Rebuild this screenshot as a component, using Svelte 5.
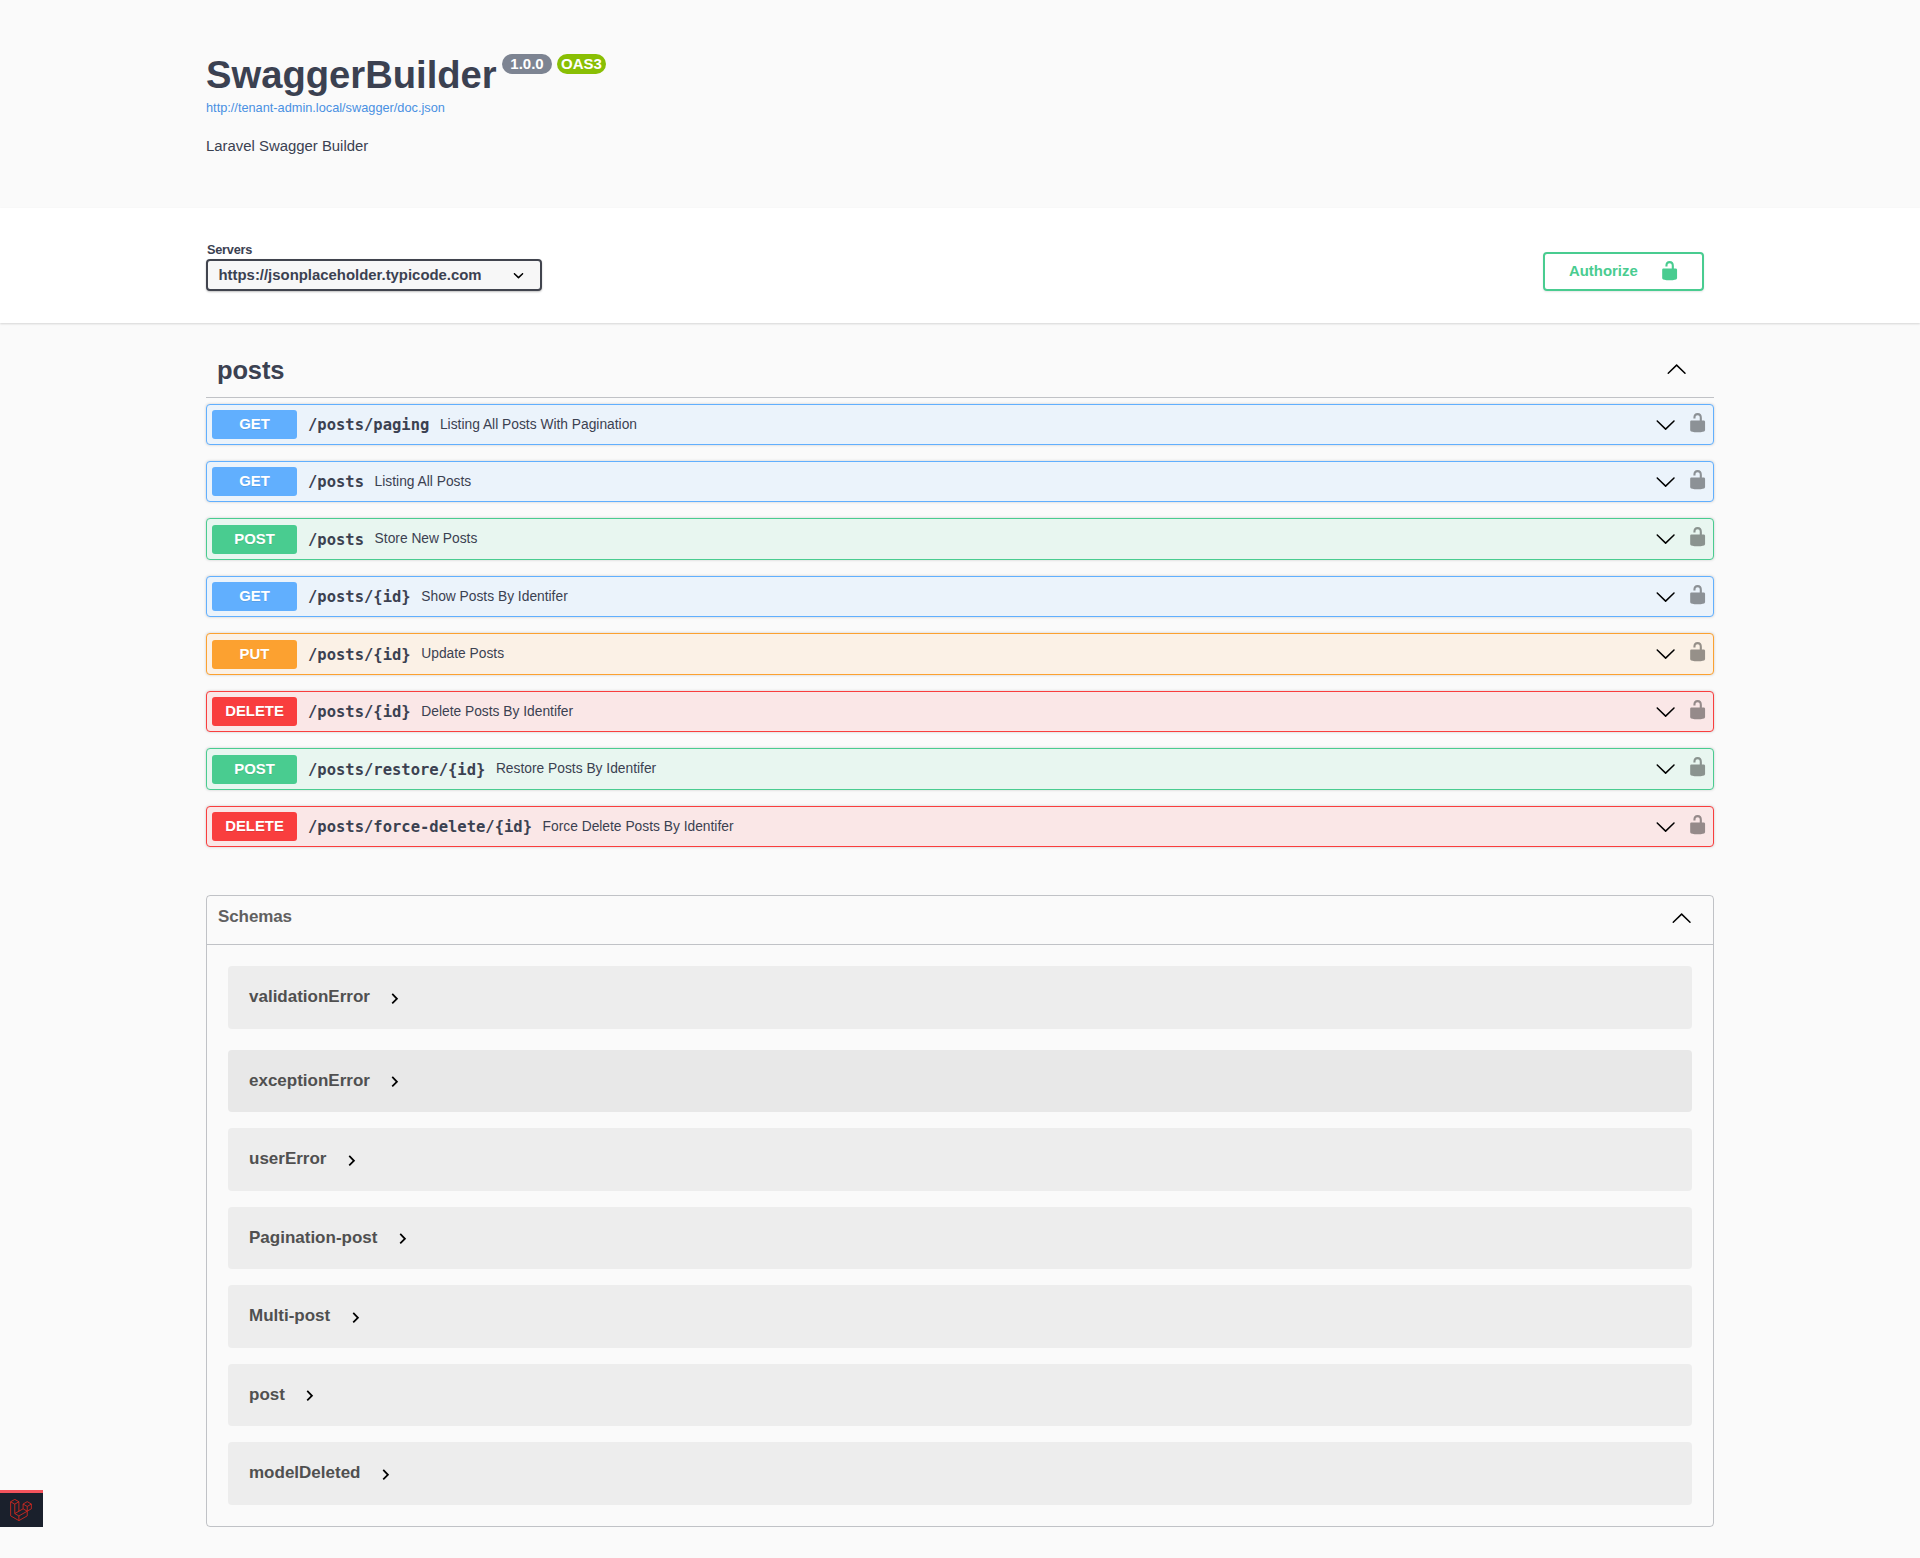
<script>
  const operations = [
    { method: 'get', path: '/posts/paging', summary: 'Listing All Posts With Pagination' },
    { method: 'get', path: '/posts', summary: 'Listing All Posts' },
    { method: 'post', path: '/posts', summary: 'Store New Posts' },
    { method: 'get', path: '/posts/{id}', summary: 'Show Posts By Identifer' },
    { method: 'put', path: '/posts/{id}', summary: 'Update Posts' },
    { method: 'delete', path: '/posts/{id}', summary: 'Delete Posts By Identifer' },
    { method: 'post', path: '/posts/restore/{id}', summary: 'Restore Posts By Identifer' },
    { method: 'delete', path: '/posts/force-delete/{id}', summary: 'Force Delete Posts By Identifer' },
  ];

  const schemas = [
    { name: 'validationError' },
    { name: 'exceptionError', hovered: true },
    { name: 'userError' },
    { name: 'Pagination-post' },
    { name: 'Multi-post' },
    { name: 'post' },
    { name: 'modelDeleted' },
  ];
</script>

{#snippet lock()}
  <svg class="lock" viewBox="0 0 20 20" aria-hidden="true">
    <path d="M15.8 8H14V5.6C14 2.703 12.665 1 10 1 7.334 1 6 2.703 6 5.6V6h2v-.801C8 3.754 8.797 3 10 3c1.203 0 2 .754 2 2.199V8H4c-.553 0-1 .646-1 1.199V17c0 .549.428 1.139.951 1.307l1.197.387C5.672 18.861 6.55 19 7.1 19h5.8c.549 0 1.428-.139 1.951-.307l1.196-.387c.524-.167.953-.757.953-1.306V9.199C17 8.646 16.352 8 15.8 8z" />
  </svg>
{/snippet}

{#snippet arrow(up)}
  <svg class="arrow" class:up viewBox="0 0 20 20" aria-hidden="true">
    <path d="M17.418 6.109c.272-.268.709-.268.979 0s.271.701 0 .969l-7.908 7.83c-.27.268-.707.268-.979 0l-7.908-7.83c-.27-.268-.27-.701 0-.969.271-.268.709-.268.979 0L10 13.25l7.418-7.141z" />
  </svg>
{/snippet}

<div class="page">
  <header class="info">
    <div class="heading">
      <h1>SwaggerBuilder</h1>
      <span class="badge version">1.0.0</span>
      <span class="badge oas">OAS3</span>
    </div>
    <a href="#doc">http://tenant-admin.local/swagger/doc.json</a>
    <p>Laravel Swagger Builder</p>
  </header>

  <section class="scheme">
    <div class="servers">
      <span class="label">Servers</span>
      <div class="select">
        <span>https://jsonplaceholder.typicode.com</span>
        <svg viewBox="0 0 20 20" aria-hidden="true">
          <path d="M13.418 7.859c.271-.268.709-.268.978 0 .27.268.272.701 0 .969l-3.908 3.83c-.27.268-.707.268-.979 0l-3.908-3.83c-.27-.267-.27-.701 0-.969.271-.268.709-.268.978 0L10 11l3.418-3.141z" />
        </svg>
      </div>
    </div>
    <button class="authorize"><span>Authorize</span>{@render lock()}</button>
  </section>

  <main>
    <div class="tag">
      <h2>posts</h2>
      {@render arrow(true)}
    </div>
    <div class="operations">
      {#each operations as op}
        <div class="op {op.method}">
          <span class="method">{op.method.toUpperCase()}</span>
          <span class="path">{op.path}</span>
          <span class="summary">{op.summary}</span>
          {@render arrow(false)}
          {@render lock()}
        </div>
      {/each}
    </div>

    <section class="models">
      <div class="models-head">
        <h3>Schemas</h3>
        {@render arrow(true)}
      </div>
      <div class="models-list">
        {#each schemas as schema}
          <div class="model" class:hovered={schema.hovered}>
            <span>{schema.name}</span>
            <svg viewBox="0 0 24 24" aria-hidden="true"><path d="M10 6L8.59 7.41 13.17 12l-4.58 4.59L10 18l6-6z" /></svg>
          </div>
        {/each}
      </div>
    </section>
  </main>

  <div class="debugbar">
    <svg viewBox="0 0 24 24" aria-hidden="true">
      <path d="M.7 3 5.2.4 9.7 3 5.2 5.6zM.7 3v15.4l9 5.2 9.1-5.2v-5.1M5.2 5.6v10.3l4.5 2.6 9.1-5.2M9.7 3v10.3M9.7 18.5v5.1M14.3 5.5l4.5-2.6 4.5 2.6-4.5 2.6zM14.3 5.5v5.2l4.5 2.6 4.5-2.6V5.5M18.8 8.1v5.2M14.3 10.7l-9.1 5.2" />
    </svg>
  </div>
</div>

<style>
  :global(body) {
    margin: 0;
    background: #fafafa;
  }
  .page {
    position: relative;
    box-sizing: border-box;
    width: 1920px;
    height: 1558px;
    overflow: hidden;
    background: #fafafa;
    color: #3b4151;
    font-family: 'Liberation Sans', Arial, sans-serif;
  }
  h1, h2, h3, p {
    margin: 0;
  }
  svg {
    display: block;
    flex: none;
  }
  .info {
    box-sizing: border-box;
    height: 208px;
    padding: 53px 206px 0;
  }
  .heading {
    display: flex;
    align-items: flex-start;
    height: 45px;
  }
  h1 {
    font-size: 38.2px;
    line-height: 44px;
    width: 296px;
    white-space: nowrap;
  }
  .badge {
    box-sizing: border-box;
    height: 20px;
    margin-top: 1px;
    border-radius: 10px;
    color: #fff;
    font-size: 15px;
    font-weight: 700;
    line-height: 20px;
    text-align: center;
  }
  .version {
    width: 50px;
    background: #7d8492;
  }
  .oas {
    width: 49px;
    margin-left: 5px;
    background: #89bf04;
  }
  .info a {
    display: block;
    height: 20px;
    color: #4990e2;
    font-size: 12.75px;
    line-height: 20px;
    text-decoration: none;
  }
  .info p {
    margin-top: 18px;
    font-size: 14.9px;
    line-height: 20px;
  }
  .scheme {
    box-sizing: border-box;
    display: flex;
    justify-content: space-between;
    height: 115px;
    padding: 34px 216px 0 206px;
    background: #fff;
    box-shadow: 0 1px 2px rgba(0, 0, 0, 0.15);
  }
  .label {
    display: block;
    height: 17px;
    padding-left: 1px;
    font-size: 12.75px;
    font-weight: 700;
    letter-spacing: -0.25px;
    line-height: 15px;
  }
  .select {
    box-sizing: border-box;
    display: flex;
    align-items: center;
    justify-content: space-between;
    width: 336px;
    height: 32px;
    padding: 0 11px 0 10.5px;
    border: 2px solid #41444e;
    border-radius: 4px;
    background: #f7f7f7;
    box-shadow: 0 1px 2px rgba(0, 0, 0, 0.25);
    font-size: 14.9px;
    font-weight: 700;
  }
  .select svg {
    width: 21px;
    height: 21px;
  }
  .authorize {
    box-sizing: border-box;
    display: flex;
    align-items: center;
    justify-content: space-between;
    width: 161px;
    height: 39px;
    margin-top: 10px;
    padding: 0 22px 2px 24px;
    border: 2px solid #49cc90;
    border-radius: 4px;
    background: transparent;
    box-shadow: 0 1px 2px rgba(0, 0, 0, 0.1);
    color: #49cc90;
    font: 700 14.9px 'Liberation Sans', Arial, sans-serif;
  }
  .lock {
    width: 21.25px;
    height: 21.25px;
    fill: currentColor;
  }
  .arrow {
    width: 21.25px;
    height: 21.25px;
  }
  .up {
    transform: rotate(180deg);
  }
  main {
    padding: 21px 206px 0;
  }
  .tag {
    box-sizing: border-box;
    display: flex;
    align-items: center;
    justify-content: space-between;
    height: 54px;
    padding: 0 27px 2px 11px;
    border-bottom: 1px solid rgba(59, 65, 81, 0.3);
  }
  h2 {
    font-size: 25.5px;
    letter-spacing: -0.15px;
    line-height: 30px;
  }
  .operations {
    display: grid;
    grid-template-rows: 41px 41px 42px 41px 42px 41px 42px 41px;
    row-gap: 16px;
    padding-top: 6px;
  }
  .op {
    box-sizing: border-box;
    display: flex;
    align-items: center;
    padding: 0 6px 0 5px;
    border: 1px solid var(--tone);
    border-radius: 4px;
    background: var(--tint);
    box-shadow: 0 0 3px rgba(0, 0, 0, 0.19);
  }
  .get {
    --tone: #61affe;
    --tint: #ebf3fb;
  }
  .post {
    --tone: #49cc90;
    --tint: #e8f6f0;
  }
  .put {
    --tone: #fca130;
    --tint: #fbf1e6;
  }
  .delete {
    --tone: #f93e3e;
    --tint: #fae7e7;
  }
  .method {
    width: 85px;
    height: 29px;
    border-radius: 3px;
    background: var(--tone);
    color: #fff;
    font-size: 14.9px;
    font-weight: 700;
    line-height: 28px;
    text-align: center;
    text-shadow: 0 1px 0 rgba(0, 0, 0, 0.1);
  }
  .path {
    margin-left: 11px;
    padding-top: 1px;
    font: 700 15.5px/20px 'DejaVu Sans Mono', monospace;
  }
  .summary {
    flex: 1;
    margin-left: 10.6px;
    font-size: 13.8px;
    line-height: 20px;
  }
  .op .lock {
    margin: 0 -1px 4px 11px;
    color: #000;
    opacity: 0.4;
  }
  .models {
    box-sizing: border-box;
    height: 632px;
    margin-top: 48px;
    border: 1px solid rgba(59, 65, 81, 0.3);
    border-radius: 4px;
  }
  .models-head {
    box-sizing: border-box;
    display: flex;
    align-items: center;
    justify-content: space-between;
    height: 49px;
    padding: 0 21px 3px 11px;
    border-bottom: 1px solid rgba(59, 65, 81, 0.3);
  }
  h3 {
    color: #606060;
    font-size: 17px;
    letter-spacing: -0.1px;
    line-height: 20px;
    padding-bottom: 3px;
  }
  .models-list {
    display: grid;
    grid-template-rows: 68px 62px 63px 62px 63px 62px 63px;
    row-gap: 16px;
    padding: 21px;
  }
  .model {
    box-sizing: border-box;
    display: flex;
    align-items: center;
    padding: 0 21px;
    border-radius: 4px;
    background: #ededed;
    color: #505050;
    font-size: 17px;
    font-weight: 700;
  }
  .model:first-child {
    margin-bottom: 5px;
  }
  .model.hovered {
    background: #e8e8e8;
  }
  .model span {
    padding-bottom: 1px;
  }
  .model svg {
    width: 21.25px;
    height: 21.25px;
    margin: 2px 0 0 14.4px;
    fill: #000;
  }
  .debugbar {
    position: absolute;
    left: 0;
    top: 1490px;
    box-sizing: border-box;
    width: 43px;
    height: 37px;
    padding: 6px 0 0 10px;
    border-top: 3px solid #f4535c;
    background: #1a202c;
  }
  .debugbar svg {
    width: 22px;
    height: 22px;
    fill: none;
    stroke: #e0291f;
    stroke-width: 0.9;
  }
</style>
